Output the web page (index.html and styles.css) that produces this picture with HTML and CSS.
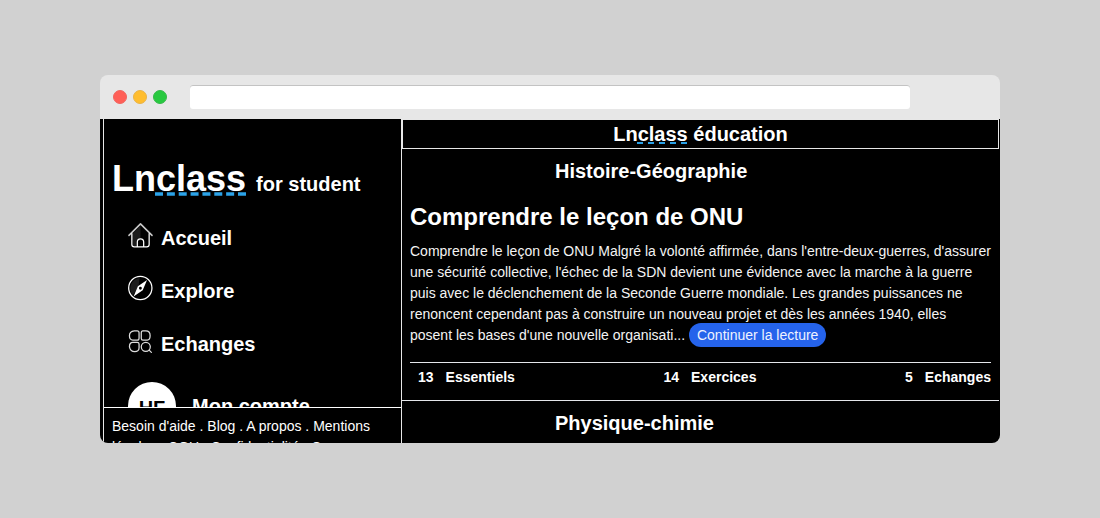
FILE: index.html
```html
<!DOCTYPE html>
<html lang="fr">
<head>
<meta charset="utf-8">
<title>Lnclass éducation</title>
<link rel="stylesheet" href="styles.css">
</head>
<body>
<div class="browser">
  <div class="toolbar">
    <span class="dot red"></span><span class="dot yellow"></span><span class="dot green"></span>
    <div class="address"></div>
  </div>
  <div class="page">
    <aside class="sidebar">
      <div class="menu">
        <div class="brand"><span class="logo">Ln<span class="wavy">class</span></span><span class="tagline">for student</span></div>
        <nav class="nav">
          <a class="item"><svg class="icon" viewBox="0 0 26 26"><path class="shade" d="M4 12 13 3v15H9v6H5z"/><path class="dim" d="M1 12.900 13 .9l12 12"/><path d="M4 11v11.300Q4 24.800 6.500 24.800h13Q22 24.800 22 22.300V11M9.700 24.800v-5a3.300 3.300 0 0 1 6.600 0v5"/></svg>Accueil</a>
          <a class="item"><svg class="icon" viewBox="0 0 26 26"><path class="shade" d="M12 2a11 11 0 0 0-7 18l6-9z"/><circle cx="12.800" cy="12.500" r="12.100"/><path class="needle" fill-rule="evenodd" d="M19.800 4.200 15.300 14.700 5.800 21.200 10.300 10.700zM12.900 11.200a1.500 1.500 0 1 0 0 3 1.500 1.500 0 0 0 0-3"/></svg>Explore</a>
          <a class="item"><svg class="icon thin" viewBox="0 0 26 26"><path d="M6.500 2H9.500Q11.500 2 11.500 4V9.500Q11.500 11.500 9.500 11.500H5Q1.500 11.500 1.500 7t5-5zM15.500 2h3q4.500 0 4.500 5T19.500 11.500h-4Q13.800 11.500 13.800 9.500V4Q13.800 2 15.500 2zM5 13.800h4.500Q11.500 13.800 11.500 15.500v4q0 4-4.500 4t-5.500-5Q1.500 13.800 5 13.800z"/><circle cx="18.500" cy="18.500" r="4.700"/><path d="m22 22 2.300 2.300"/></svg>Echanges</a>
          <a class="account"><span class="avatar">HF</span>Mon compte</a>
        </nav>
      </div>
      <footer class="links">Besoin d'aide . Blog . A propos . Mentions légales . CGU . Confidentialité . C...</footer>
    </aside>
    <main class="content">
      <header class="heading">Ln<span class="wavy">class</span> éducation</header>
      <section class="course">
        <h2 class="subject">Histoire-Géographie</h2>
        <h1 class="lesson">Comprendre le leçon de ONU</h1>
        <p class="summary">Comprendre le leçon de ONU Malgré la volonté affirmée, dans l'entre-deux-guerres, d'assurer une sécurité collective, l'échec de la SDN devient une évidence avec la marche à la guerre puis avec le déclenchement de la Seconde Guerre mondiale. Les grandes puissances ne renoncent cependant pas à construire un nouveau projet et dès les années 1940, elles posent les bases d'une nouvelle organisati... <a class="more">Continuer la lecture</a></p>
        <div class="stats">
          <span class="stat"><b>13</b><b>Essentiels</b></span>
          <span class="stat"><b>14</b><b>Exercices</b></span>
          <span class="stat"><b>5</b><b>Echanges</b></span>
        </div>
      </section>
      <section class="course">
        <h2 class="subject">Physique-chimie</h2>
      </section>
    </main>
  </div>
</div>
</body>
</html>
```
FILE: styles.css
```css
* { box-sizing: border-box; }
body {
  margin: 0;
  height: 518px;
  padding: 75px 100px;
  background: #d1d1d1;
  font-family: "Liberation Sans", Arial, sans-serif;
  font-size: 14px;
  line-height: 21px;
  color: #fff;
  overflow: hidden;
}
.browser {
  width: 900px;
  height: 368px;
  border-radius: 8px;
  overflow: hidden;
  background: linear-gradient(#e7e7e7 44px, #000 44px);
}
.toolbar {
  display: flex;
  align-items: center;
  gap: 6px;
  height: 44px;
  padding-left: 13px;
}
.dot { width: 14px; height: 14px; border-radius: 50%; border: 1px solid; }
.red { background: #ff5f57; border-color: #f0655f; }
.yellow { background: #ffbd2e; border-color: #e9b346; }
.green { background: #28c940; border-color: #35b849; }
.address {
  width: 720px;
  height: 24px;
  margin-left: 17px;
  border-radius: 3px;
  background: #fff;
  box-shadow: inset 0 1px 0 #c3c3c3;
}
.page { display: flex; height: 324px; padding: 0 1px 0 3px; }
.sidebar {
  display: flex;
  flex-direction: column;
  width: 299px;
  border: solid #e7e7e7;
  border-width: 0 1px;
}
.menu { flex: none; height: 288px; padding: 38px 8px 0; overflow: hidden; }
.brand { display: flex; align-items: baseline; gap: 10px; height: 55px; font-weight: bold; }
.logo { font-size: 36px; line-height: 43px; }
.tagline { font-size: 20px; }
.wavy { text-decoration: underline dashed #2ba2e8; }
.nav { display: flex; flex-direction: column; padding-left: 16px; font-size: 20px; font-weight: bold; }
.item { display: flex; align-items: center; gap: 8px; height: 53px; }
.icon {
  width: 25px;
  height: 25px;
  margin-bottom: 6px;
  overflow: visible;
  fill: none;
  stroke: #fff;
  stroke-width: 1.3;
  stroke-linecap: round;
  stroke-linejoin: round;
}
.thin { stroke-width: 1.3; stroke: #ddd; }
.icon .shade { fill: #1c1c1c; stroke: none; }
.icon .dim { stroke: #c8c8c8; stroke-width: 1.6; }
.icon .needle { fill: #fff; stroke: none; }
.account { display: flex; align-items: center; gap: 16px; margin-top: 11px; }
.avatar {
  width: 48px;
  height: 48px;
  border-radius: 50%;
  background: #fff;
  color: #000;
  line-height: 52px;
  text-align: center;
}
.links { flex: 1; min-height: 0; padding: 8px 8px 0; border-top: 1px solid #fff; }
.content { flex: 1; }
.heading {
  height: 30px;
  border: 1px solid #e7e7e7;
  font-size: 20px;
  font-weight: bold;
  line-height: 28px;
  text-align: center;
}
.course { padding: 8px 8px 0; border-bottom: 1px solid #e5e7eb; }
.course:last-child { border-bottom: 0; }
.subject { margin: 0 0 0 145px; font-size: 20px; line-height: 28px; }
.lesson { margin: 16px 0 8px; font-size: 24px; line-height: 32px; }
.summary { margin: 0; color: #f4f4f4; }
.more { padding: 4px 8px; border-radius: 12px; background: #2563eb; color: #eef2ff; }
.stats {
  display: flex;
  justify-content: space-between;
  height: 38px;
  margin-top: 16px;
  padding: 4px 0 0 8px;
  border-top: 1px solid #e5e7eb;
}
.stat { display: flex; gap: 12px; }
```
